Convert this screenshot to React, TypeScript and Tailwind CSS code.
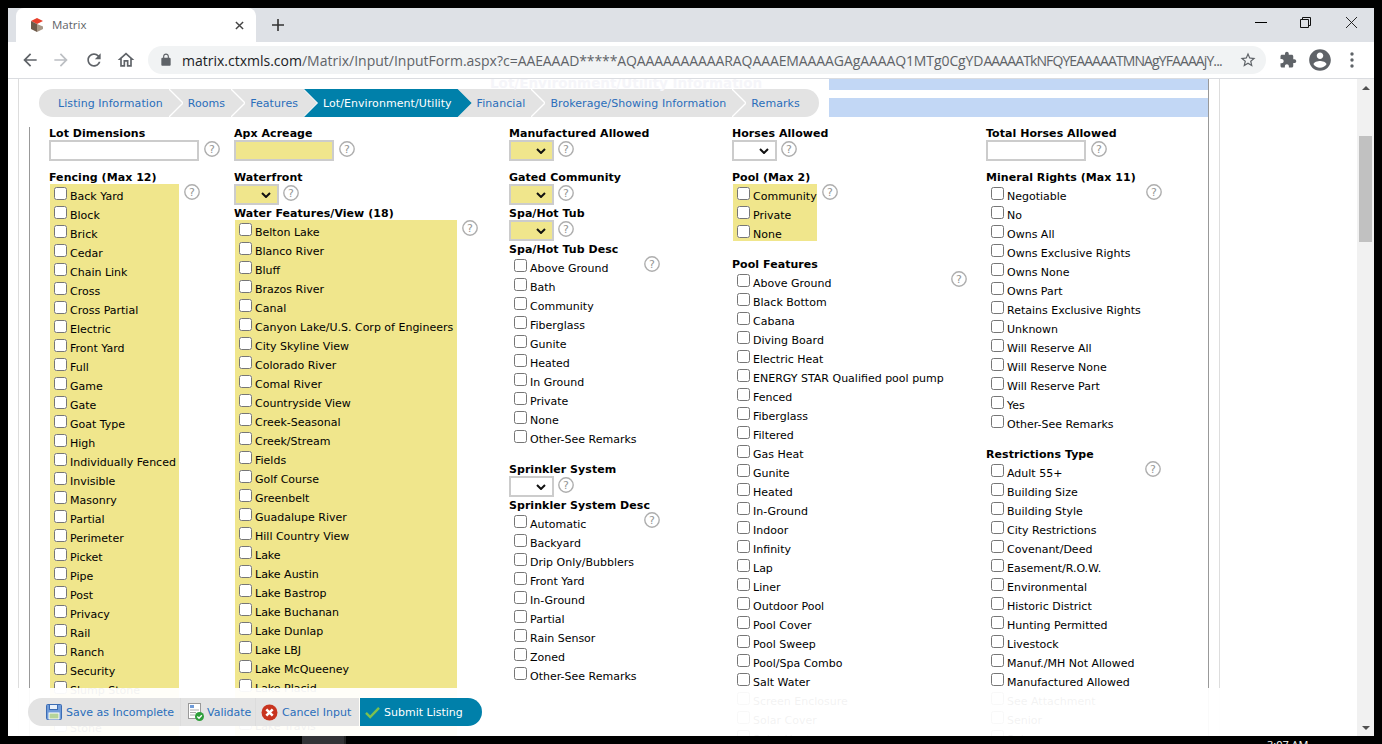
import React from "react";

const FONT = "font-['DejaVu_Sans','Liberation_Sans',sans-serif]";

const fencing = ["Back Yard","Block","Brick","Cedar","Chain Link","Cross","Cross Partial","Electric","Front Yard","Full","Game","Gate","Goat Type","High","Individually Fenced","Invisible","Masonry","Partial","Perimeter","Picket","Pipe","Post","Privacy","Rail","Ranch","Security","Slump Stone","Split Rail","Stone","Vinyl"];
const water = ["Belton Lake","Blanco River","Bluff","Brazos River","Canal","Canyon Lake/U.S. Corp of Engineers","City Skyline View","Colorado River","Comal River","Countryside View","Creek-Seasonal","Creek/Stream","Fields","Golf Course","Greenbelt","Guadalupe River","Hill Country View","Lake","Lake Austin","Lake Bastrop","Lake Buchanan","Lake Dunlap","Lake LBJ","Lake McQueeney","Lake Placid","Lake Somerville","Lake Travis","Lake Travis"];
const spa = ["Above Ground","Bath","Community","Fiberglass","Gunite","Heated","In Ground","Private","None","Other-See Remarks"];
const sprinkler = ["Automatic","Backyard","Drip Only/Bubblers","Front Yard","In-Ground","Partial","Rain Sensor","Zoned","Other-See Remarks"];
const pool = ["Community","Private","None"];
const poolFeatures = ["Above Ground","Black Bottom","Cabana","Diving Board","Electric Heat","ENERGY STAR Qualified pool pump","Fenced","Fiberglass","Filtered","Gas Heat","Gunite","Heated","In-Ground","Indoor","Infinity","Lap","Liner","Outdoor Pool","Pool Cover","Pool Sweep","Pool/Spa Combo","Salt Water","Screen Enclosure","Solar Cover","Solar Heat"];
const mineral = ["Negotiable","No","Owns All","Owns Exclusive Rights","Owns None","Owns Part","Retains Exclusive Rights","Unknown","Will Reserve All","Will Reserve None","Will Reserve Part","Yes","Other-See Remarks"];
const restrictions = ["Adult 55+","Building Size","Building Style","City Restrictions","Covenant/Deed","Easement/R.O.W.","Environmental","Historic District","Hunting Permitted","Livestock","Manuf./MH Not Allowed","Manufactured Allowed","See Attachment","Senior","Solar"];

function Icon({ d, className, fill = "#5f6368" }: { d: string; className: string; fill?: string }) {
  return (
    <svg viewBox="0 0 24 24" className={className} fill={fill}>
      <path d={d} />
    </svg>
  );
}

function Help({ className = "" }: { className?: string }) {
  return (
    <svg viewBox="0 0 16 16" className={`w-4 h-4 shrink-0 ${className}`}>
      <circle cx="8" cy="8" r="7.200" fill="#fff" stroke="#aeaeae" strokeWidth="1.400" />
      <text x="8" y="12" textAnchor="middle" fontSize="11" fill="#969696" fontFamily="DejaVu Sans, sans-serif">?</text>
    </svg>
  );
}

function Label({ children, className = "" }: { children: React.ReactNode; className?: string }) {
  return <div className={`h-[13px] leading-[13px] text-[11px] tracking-[0.05px] font-bold text-black whitespace-nowrap ${className}`}>{children}</div>;
}

function TextBox({ width, yellow }: { width: string; yellow?: boolean }) {
  return (
    <div className="flex items-start gap-[5px]">
      <div className={`${width} h-[21px] border-2 border-[#cccccc] ${yellow ? "bg-[#f0e68c]" : "bg-white"}`} />
      <Help className="mt-px" />
    </div>
  );
}

function Select({ yellow }: { yellow?: boolean }) {
  return (
    <div className="flex items-start gap-[4px]">
      <div className={`w-[45px] h-[21px] border-2 border-[#cccccc] flex items-center justify-end pr-[6px] ${yellow ? "bg-[#f0e68c]" : "bg-white"}`}>
        <svg viewBox="0 0 10 6" className="w-[10px] h-[6px]">
          <path d="M1 1l4 4 4-4" fill="none" stroke="#111" strokeWidth="2" />
        </svg>
      </div>
      <Help className="mt-px" />
    </div>
  );
}

function CheckList({ items, width, yellow }: { items: string[]; width: string; yellow?: boolean }) {
  return (
    <div className="flex items-start gap-[5px] ml-px">
      <div className={`${width} shrink-0 ${yellow ? "bg-[#f0e68c]" : ""}`}>
        {items.map((t, i) => (
          <div key={i} className="h-[19px] flex items-start pl-[4px] whitespace-nowrap">
            <input type="checkbox" className="m-0 mt-[3px] w-[13px] h-[13px] shrink-0" />
            <span className="ml-[3px] mt-[6px] leading-[14px] text-[11px] text-black">{t}</span>
          </div>
        ))}
      </div>
      <Help />
    </div>
  );
}

function Tab({ text, last }: { text: string; last?: boolean }) {
  return (
    <div className="relative h-full flex items-center pl-[19px] pr-[6px] pt-[2px] text-[#2a6ebb] whitespace-nowrap">
      {text}
      {!last && (
        <svg viewBox="0 0 14 28" className="absolute left-full top-0 w-[14px] h-[28px] z-10">
          <path d="M0 0l14 14L0 28" fill="none" stroke="#fff" strokeWidth="1.300" />
        </svg>
      )}
    </div>
  );
}

function Tabs() {
  return (
    <div className="ml-[10px] mt-[10px] w-[780px] h-[28px] bg-[#e3e3e3] rounded-full flex text-[11px] tracking-[0.07px] overflow-hidden">
      <Tab text="Listing Information" />
      <Tab text="Rooms" />
      <Tab text="Features" />
      <div className="relative z-20 h-full flex items-center pl-[19px] pr-[20px] pt-[2px] -mr-[14px] bg-[#0080aa] text-white whitespace-nowrap [clip-path:polygon(0_0,calc(100%-14px)_0,100%_50%,calc(100%-14px)_100%,0_100%,14px_50%)]">
        Lot/Environment/Utility
      </div>
      <Tab text="Financial" />
      <Tab text="Brokerage/Showing Information" />
      <Tab text="Remarks" last />
    </div>
  );
}

function ChromeBar() {
  return (
    <>
      <div className="h-[34px] bg-[#dee1e6] flex items-start shrink-0">
        <div className="ml-[8px] w-[240px] h-[34px] bg-white rounded-t-lg flex items-center pl-[13px]">
          <svg viewBox="0 0 16 16" className="w-[16px] h-[16px]">
            <path d="M2 4l6-3 6 3-6 3z" fill="#e8402c" />
            <path d="M2 4l6 3v8l-6-3z" fill="#6d5a4a" />
            <path d="M14 9.500L8 7v8l6-3z" fill="#a89786" />
          </svg>
          <span className="ml-[7px] text-[11.5px] text-[#5f6368] font-['Open_Sans',sans-serif]">Matrix</span>
          <svg viewBox="0 0 10 10" className="w-[9px] h-[9px] ml-[149px]">
            <path d="M1 1l8 8M9 1l-8 8" stroke="#444" strokeWidth="1.600" />
          </svg>
        </div>
        <svg viewBox="0 0 12 12" className="w-[12px] h-[12px] ml-[16px] mt-[11px]">
          <path d="M6 0v12M0 6h12" stroke="#333" strokeWidth="1.600" />
        </svg>
        <div className="ml-auto flex items-center h-[28px]">
          <div className="w-[12px] h-px bg-black mr-[33px]" />
          <svg viewBox="0 0 11 11" className="w-[11px] h-[11px] mr-[35px]">
            <path d="M.5 2.500h8v8h-8zM2.500 2.500v-2h8v8h-2" fill="none" stroke="#111" />
          </svg>
          <svg viewBox="0 0 11 11" className="w-[11px] h-[11px] mr-[17px]">
            <path d="M0 0l11 11M11 0L0 11" stroke="#111" strokeWidth=".9" />
          </svg>
        </div>
      </div>
      <div className="h-[36px] bg-white flex items-center shrink-0 relative">
        <Icon className="w-[20px] h-[20px] ml-[12px]" d="M20 11H7.830l5.590-5.590L12 4l-8 8 8 8 1.410-1.410L7.830 13H20v-2z" fill="#5f6368" />
        <Icon className="w-[20px] h-[20px] ml-[11px]" d="M12 4l-1.410 1.410L16.170 11H4v2h12.170l-5.580 5.590L12 20l8-8z" fill="#bcbfc3" />
        <Icon className="w-[20px] h-[20px] ml-[13px]" d="M17.650 6.350C16.200 4.900 14.210 4 12 4c-4.420 0-7.990 3.580-7.990 8s3.570 8 7.990 8c3.730 0 6.840-2.550 7.730-6h-2.080c-.82 2.330-3.040 4-5.650 4-3.310 0-6-2.690-6-6s2.690-6 6-6c1.660 0 3.140.69 4.220 1.780L13 11h7V4l-2.350 2.350z" />
        <Icon className="w-[20px] h-[20px] ml-[12px]" d="M12 5.690l5 4.500V18h-2v-6H9v6H7v-7.810l5-4.500M12 3L2 12h3v8h6v-6h2v6h6v-8h3L12 3z" />
        <div className="ml-[12px] w-[1118px] h-[28px] rounded-full bg-[#f1f3f4] flex items-center pl-[11px] overflow-hidden">
          <Icon className="w-[14px] h-[14px] shrink-0" d="M18 8h-1V6c0-2.760-2.240-5-5-5S7 3.240 7 6v2H6c-1.100 0-2 .9-2 2v10c0 1.100.9 2 2 2h12c1.100 0 2-.9 2-2V10c0-1.100-.9-2-2-2zM9 6c0-1.660 1.340-3 3-3s3 1.340 3 3v2H9V6z" />
          <span className="ml-[9px] text-[14px] whitespace-nowrap w-[1042px] overflow-hidden shrink-0 text-[#5f6368] font-['Open_Sans',sans-serif]">
            <span className="text-[#202124]">matrix.ctxmls.com</span>/Matrix/Input/InputForm.aspx?c=<span className="tracking-[-0.1px]">AAEAAAD*****AQAAAAAAAAAARAQAAAEMAAAAGAgAAAAQ1MTg0CgYD</span><span className="tracking-[-0.9px]">AAAAATkNFQYEAAAAATMNAgYFAAAAjY...</span>
          </span>
          <Icon className="w-[18px] h-[18px] ml-[15px] shrink-0" d="M22 9.240l-7.190-.62L12 2 9.190 8.630 2 9.240l5.460 4.730L5.820 21 12 17.270 18.180 21l-1.630-7.030L22 9.240zM12 15.400l-3.760 2.270 1-4.280-3.320-2.880 4.380-.38L12 6.100l1.710 4.040 4.380.38-3.320 2.880 1 4.280L12 15.400z" />
        </div>
        <Icon className="w-[18px] h-[18px] ml-[13px]" d="M20.500 11H19V7c0-1.100-.9-2-2-2h-4V3.500C13 2.120 11.880 1 10.500 1S8 2.120 8 3.500V5H4c-1.100 0-1.990.9-1.990 2v3.800H3.500c1.490 0 2.700 1.210 2.700 2.700s-1.210 2.700-2.700 2.700H2V20c0 1.100.9 2 2 2h3.800v-1.500c0-1.490 1.210-2.700 2.700-2.700 1.490 0 2.700 1.210 2.700 2.700V22H17c1.100 0 2-.9 2-2v-4h1.500c1.380 0 2.500-1.120 2.500-2.500S21.880 11 20.500 11z" />
        <Icon className="w-[26px] h-[26px] ml-[10px]" d="M12 2C6.480 2 2 6.480 2 12s4.480 10 10 10 10-4.480 10-10S17.520 2 12 2zm0 3c1.660 0 3 1.340 3 3s-1.340 3-3 3-3-1.340-3-3 1.340-3 3-3zm0 14.200c-2.500 0-4.710-1.280-6-3.220.03-1.990 4-3.080 6-3.080 1.990 0 5.970 1.090 6 3.080-1.290 1.940-3.500 3.220-6 3.220z" />
        <svg viewBox="0 0 4 16" className="w-[4px] h-[16px] ml-[17px]">
          <circle cx="2" cy="2" r="1.700" fill="#5f6368" />
          <circle cx="2" cy="8" r="1.700" fill="#5f6368" />
          <circle cx="2" cy="14" r="1.700" fill="#5f6368" />
        </svg>
      </div>
      <div className="h-px bg-[#dadce0] shrink-0" />
    </>
  );
}

function BottomBar() {
  return (
    <div className="absolute left-0 right-0 bottom-0 h-[48px] bg-white/95 z-30 pl-[20px] pt-[10px]">
      <div className="flex h-[28px] w-[454px] text-[11px] text-[#2a6ebb] whitespace-nowrap">
        <div className="w-[153px] bg-[#e3e3e3] rounded-l-full flex items-center pl-[18px] border-r border-[#dcdcdc]">
          <svg viewBox="0 0 16 16" className="w-[16px] h-[16px] shrink-0">
            <rect x=".5" y=".5" width="15" height="15" rx="1" fill="#6f9bd8" stroke="#3c6cb4" />
            <rect x="3.500" y=".5" width="8" height="5" fill="#e8f0fa" stroke="#3c6cb4" />
            <rect x="3" y="9" width="10" height="6" fill="#b5d49a" stroke="#fff" />
          </svg>
          <span className="ml-[4px] pt-[2px]">Save as Incomplete</span>
        </div>
        <div className="w-[75px] bg-[#e3e3e3] flex items-center pl-[7px] border-r border-[#dcdcdc]">
          <svg viewBox="0 0 16 18" className="w-[16px] h-[18px] shrink-0">
            <rect x=".5" y=".5" width="12" height="15" fill="#fff" stroke="#999" />
            <rect x="2" y="2" width="4" height="3" fill="#6f9bd8" />
            <path d="M2 7h9M2 9.500h6M2 12h5" stroke="#aaa" />
            <circle cx="11.500" cy="13.500" r="4.500" fill="#2e9e3a" />
            <path d="M9.300 13.500l1.700 1.700 2.800-3" fill="none" stroke="#fff" strokeWidth="1.300" />
          </svg>
          <span className="ml-[3px] pt-[2px]">Validate</span>
        </div>
        <div className="w-[103px] bg-[#e3e3e3] flex items-center pl-[5px]">
          <svg viewBox="0 0 16 16" className="w-[17px] h-[17px] shrink-0">
            <circle cx="8" cy="8" r="7.500" fill="#c8341f" />
            <path d="M5 5l6 6M11 5l-6 6" stroke="#fff" strokeWidth="2.400" />
          </svg>
          <span className="ml-[4px] pt-[2px]">Cancel Input</span>
        </div>
        <div className="flex-1 bg-[#0080aa] rounded-r-full flex items-center pl-[5px] ml-px text-white">
          <svg viewBox="0 0 16 14" className="w-[15px] h-[13px] shrink-0">
            <path d="M1 7.500l4.500 4.500L15 2" fill="none" stroke="#7cc04f" strokeWidth="2.600" />
          </svg>
          <span className="ml-[4px] pt-[2px]">Submit Listing</span>
        </div>
      </div>
    </div>
  );
}

export default function App() {
  return (
    <div className={`w-[1382px] h-[744px] bg-black flex flex-col overflow-hidden ${FONT}`}>
      <div className="h-[8px] shrink-0" />
      <div className="mx-[8px] w-[1366px] h-[728px] flex flex-col shrink-0 bg-white">
        <ChromeBar />
        <div className="flex-1 flex min-h-0">
          <div className="relative flex-1 overflow-hidden pl-[10px]">
            <div className="w-[1202px] h-full border-x border-[#dddddd] pl-[10px] pr-[10px]">
              {/* header strip */}
              <div className="relative h-[48px] flex border-r border-[#999999] w-[1180px]">
                <div className="absolute left-[461px] -top-[6px] text-[13.5px] font-bold text-[#f5f5f9] whitespace-nowrap">Lot/Environment/Utility Information</div>
                <Tabs />
                <div className="ml-[10px] flex-1 flex flex-col">
                  <div className="h-[11px] bg-[#c2d7f5]" />
                  <div className="h-[19px] mt-[8px] bg-[#c2d7f5]" />
                </div>
              </div>
              {/* form */}
              <div className="flex w-[1180px] h-[800px] border-x border-[#999999] text-[11px]">
                <div className="w-[204px] pl-[19px] shrink-0">
                  <Label>Lot Dimensions</Label>
                  <TextBox width="w-[150px]" />
                  <Label className="mt-[10px]">Fencing (Max 12)</Label>
                  <CheckList items={fencing} width="w-[129px]" yellow />
                </div>
                <div className="w-[275px] shrink-0">
                  <Label>Apx Acreage</Label>
                  <TextBox width="w-[100px]" yellow />
                  <Label className="mt-[10px]">Waterfront</Label>
                  <Select yellow />
                  <Label className="mt-[2px]">Water Features/View (18)</Label>
                  <CheckList items={water} width="w-[222px]" yellow />
                </div>
                <div className="w-[223px] shrink-0">
                  <Label>Manufactured Allowed</Label>
                  <Select yellow />
                  <Label className="mt-[10px]">Gated Community</Label>
                  <Select yellow />
                  <Label className="mt-[2px]">Spa/Hot Tub</Label>
                  <Select yellow />
                  <Label className="mt-[2px]">Spa/Hot Tub Desc</Label>
                  <CheckList items={spa} width="w-[129px]" />
                  <Label className="mt-[17px]">Sprinkler System</Label>
                  <Select />
                  <Label className="mt-[2px]">Sprinkler System Desc</Label>
                  <CheckList items={sprinkler} width="w-[129px]" />
                </div>
                <div className="w-[254px] shrink-0">
                  <Label>Horses Allowed</Label>
                  <Select />
                  <Label className="mt-[10px]">Pool (Max 2)</Label>
                  <CheckList items={pool} width="w-[84px]" yellow />
                  <Label className="mt-[17px]">Pool Features</Label>
                  <CheckList items={poolFeatures} width="w-[213px]" />
                </div>
                <div className="flex-1">
                  <Label>Total Horses Allowed</Label>
                  <TextBox width="w-[100px]" />
                  <Label className="mt-[10px]">Mineral Rights (Max 11)</Label>
                  <CheckList items={mineral} width="w-[154px]" />
                  <Label className="mt-[17px]">Restrictions Type</Label>
                  <CheckList items={restrictions} width="w-[153px]" />
                </div>
              </div>
            </div>
            <BottomBar />
          </div>
          <div className="w-[17px] bg-[#f1f1f1] flex flex-col items-center shrink-0">
            <div className="h-[17px] flex items-center justify-center">
              <svg viewBox="0 0 8 4" className="w-[8px] h-[4px]"><path d="M4 0l4 4H0z" fill="#505050" /></svg>
            </div>
            <div className="mt-[40px] w-[13px] h-[106px] bg-[#c1c1c1]" />
            <div className="mt-auto h-[17px] flex items-center justify-center">
              <svg viewBox="0 0 8 4" className="w-[8px] h-[4px]"><path d="M4 4l4-4H0z" fill="#505050" /></svg>
            </div>
          </div>
        </div>
      </div>
      <div className="h-[8px] shrink-0 flex overflow-hidden">
        <div className="ml-[302px] w-[44px] bg-[#333336] border-r-2 border-[#222]" />
        <span className="ml-[921px] mt-[2px] text-[11px] leading-[14px] text-white whitespace-nowrap font-['Open_Sans',sans-serif]">3:07 AM</span>
      </div>
    </div>
  );
}
